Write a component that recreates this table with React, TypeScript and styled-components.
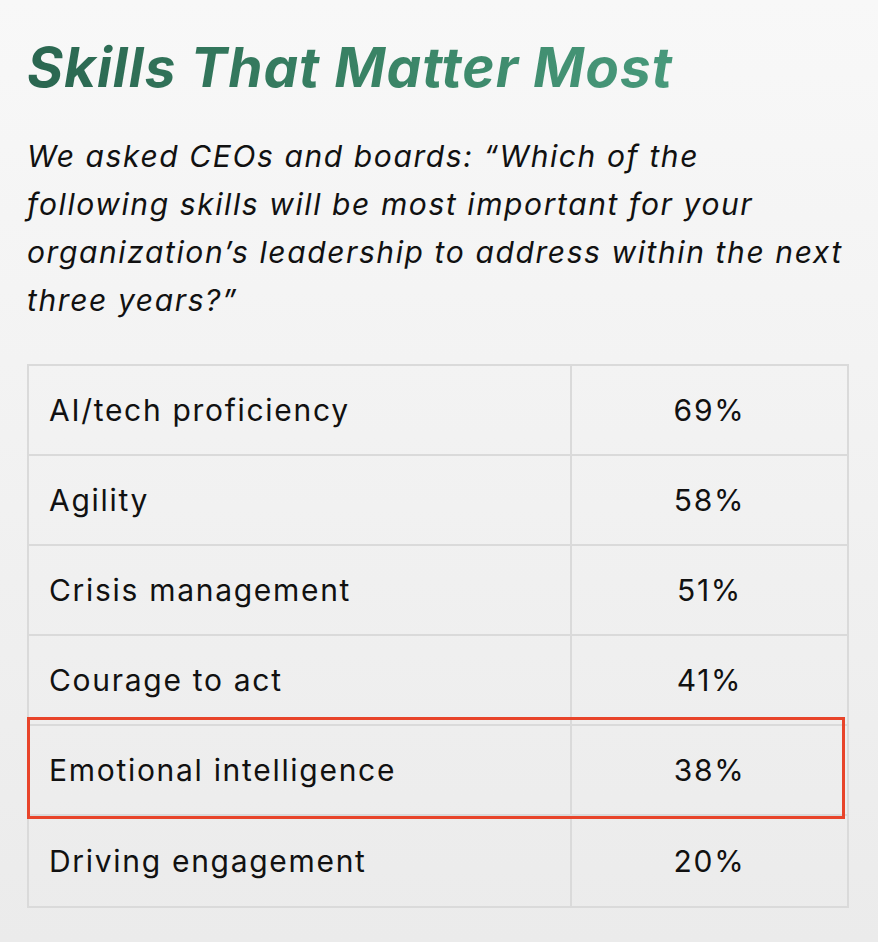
import { createGlobalStyle, styled } from "styled-components";

const GlobalStyle = createGlobalStyle`
	html, body {
		margin: 0;
		padding: 0;
	}
	body {
		background: linear-gradient(180deg, #f8f8f8 0%, #ebebeb 100%);
		min-height: 942px;
		font-family: Inter, "Noto Sans", sans-serif;
		color: #111;
	}
`;

const Page = styled.div`
	padding: 32px 29px 0 27px;
	min-height: 942px;
	box-sizing: border-box;
`;

const Title = styled.h1`
	display: inline-block;
	margin: 0;
	font-size: 55px;
	font-weight: 700;
	font-style: italic;
	line-height: 70px;
	letter-spacing: 1px;
	background: linear-gradient(90deg, #2a6650 0%, #3a8466 55%, #48997b 100%);
	-webkit-background-clip: text;
	background-clip: text;
	color: transparent;
`;

const Question = styled.p`
	margin: 30px 0 40px;
	font-size: 30px;
	font-style: italic;
	line-height: 48px;
	letter-spacing: 1.6px;
	white-space: nowrap;
	color: #111;
`;

const Table = styled.div`
	display: grid;
	grid-template-columns: 541px 1fr;
	border: 2px solid #dadada;
	width: 822px;
	box-sizing: border-box;
`;

const Row = styled.div`
	display: contents;
`;

const Cell = styled.div<{ $center?: boolean; $last?: boolean }>`
	height: 90px;
	box-sizing: border-box;
	display: flex;
	align-items: center;
	justify-content: ${(p) => (p.$center ? "center" : "flex-start")};
	padding-left: ${(p) => (p.$center ? "0" : "20px")};
	font-size: 30px;
	letter-spacing: 1.7px;
	border-bottom: ${(p) => (p.$last ? "none" : "2px solid #dadada")};
	border-left: ${(p) => (p.$center ? "2px solid #dadada" : "none")};
`;

const TableWrap = styled.div`
	position: relative;
`;

const Highlight = styled.div`
	position: absolute;
	left: 0;
	top: 353px;
	width: 818px;
	height: 102px;
	border: 3px solid #e8442a;
	box-sizing: border-box;
	pointer-events: none;
`;

const rows = [
	["AI/tech proficiency", "69%"],
	["Agility", "58%"],
	["Crisis management", "51%"],
	["Courage to act", "41%"],
	["Emotional intelligence", "38%"],
	["Driving engagement", "20%"],
];

const App = () => {
	return (
		<>
			<GlobalStyle />
			<Page>
				<Title>Skills That Matter Most</Title>
				<Question>
					We asked CEOs and boards: “Which of the
					<br />
					following skills will be most important for your
					<br />
					organization’s leadership to address within the next
					<br />
					three years?”
				</Question>
				<TableWrap>
					<Table>
						{rows.map(([skill, pct], i) => (
							<Row key={skill}>
								<Cell $last={i === rows.length - 1}>{skill}</Cell>
								<Cell $center $last={i === rows.length - 1}>
									{pct}
								</Cell>
							</Row>
						))}
					</Table>
					<Highlight />
				</TableWrap>
			</Page>
		</>
	);
};

export default App;
